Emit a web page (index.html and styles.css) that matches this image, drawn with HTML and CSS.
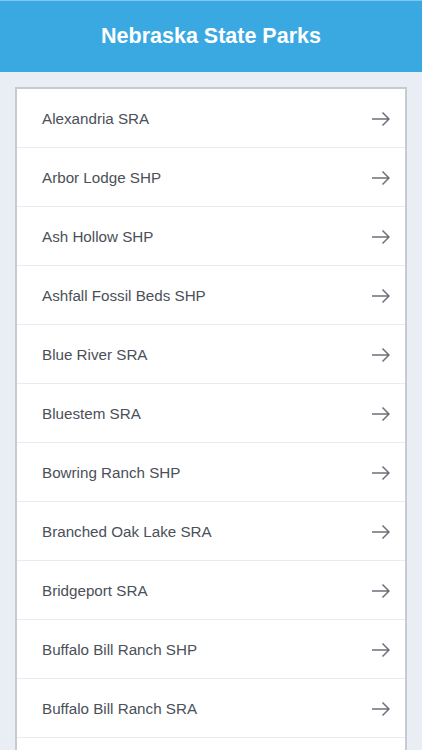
FILE: index.html
```html
<!DOCTYPE html>
<html lang="en">
<head>
  <meta charset="UTF-8">
  <meta name="viewport" content="width=device-width, initial-scale=1.0">
  <title>Nebraska State Parks</title>
  <link rel="stylesheet" href="styles.css">
</head>
<body>

<div class="header">
  <h1>Nebraska State Parks</h1>
</div>

<div class="container">
  <ul class="park-list">
    <li><span>Alexandria SRA</span><svg viewBox="0 0 20 20"><path d="M2 10H19M12.5 3.5L19 10L12.5 16.5"/></svg></li>
    <li><span>Arbor Lodge SHP</span><svg viewBox="0 0 20 20"><path d="M2 10H19M12.5 3.5L19 10L12.5 16.5"/></svg></li>
    <li><span>Ash Hollow SHP</span><svg viewBox="0 0 20 20"><path d="M2 10H19M12.5 3.5L19 10L12.5 16.5"/></svg></li>
    <li><span>Ashfall Fossil Beds SHP</span><svg viewBox="0 0 20 20"><path d="M2 10H19M12.5 3.5L19 10L12.5 16.5"/></svg></li>
    <li><span>Blue River SRA</span><svg viewBox="0 0 20 20"><path d="M2 10H19M12.5 3.5L19 10L12.5 16.5"/></svg></li>
    <li><span>Bluestem SRA</span><svg viewBox="0 0 20 20"><path d="M2 10H19M12.5 3.5L19 10L12.5 16.5"/></svg></li>
    <li><span>Bowring Ranch SHP</span><svg viewBox="0 0 20 20"><path d="M2 10H19M12.5 3.5L19 10L12.5 16.5"/></svg></li>
    <li><span>Branched Oak Lake SRA</span><svg viewBox="0 0 20 20"><path d="M2 10H19M12.5 3.5L19 10L12.5 16.5"/></svg></li>
    <li><span>Bridgeport SRA</span><svg viewBox="0 0 20 20"><path d="M2 10H19M12.5 3.5L19 10L12.5 16.5"/></svg></li>
    <li><span>Buffalo Bill Ranch SHP</span><svg viewBox="0 0 20 20"><path d="M2 10H19M12.5 3.5L19 10L12.5 16.5"/></svg></li>
    <li><span>Buffalo Bill Ranch SRA</span><svg viewBox="0 0 20 20"><path d="M2 10H19M12.5 3.5L19 10L12.5 16.5"/></svg></li>
    <li></li>
  </ul>
</div>

</body>
</html>
```

FILE: styles.css
```css
body {
  font-family: "Liberation Sans", Arial, sans-serif;
  background-color: #e9eef5;
  margin: 0;
  padding: 0;
  height: 750px;
  overflow: hidden;
}
.header {
  background-color: #3ba9e1;
  border-top: 1px solid #7cc8ef;
  height: 71px;
  display: flex;
  align-items: center;
  justify-content: center;
}
.header h1 {
  margin: 0;
  color: white;
  font-size: 21.5px;
  font-weight: bold;
}
.container {
  padding: 15px 15px 0 15px;
}
.park-list {
  list-style: none;
  margin: 0;
  padding: 0;
  background-color: white;
  border: 2px solid #c6cad1;
  border-bottom: none;
}
.park-list li {
  box-sizing: border-box;
  height: 59px;
  padding: 1px 15px 0 25px;
  border-bottom: 1px solid #e8ecf0;
  display: flex;
  align-items: center;
  justify-content: space-between;
  color: #4b5059;
  font-size: 15.2px;
}
.park-list svg {
  width: 20px;
  height: 20px;
  fill: none;
  stroke: #6c7078;
  stroke-width: 1.5;
}
```
